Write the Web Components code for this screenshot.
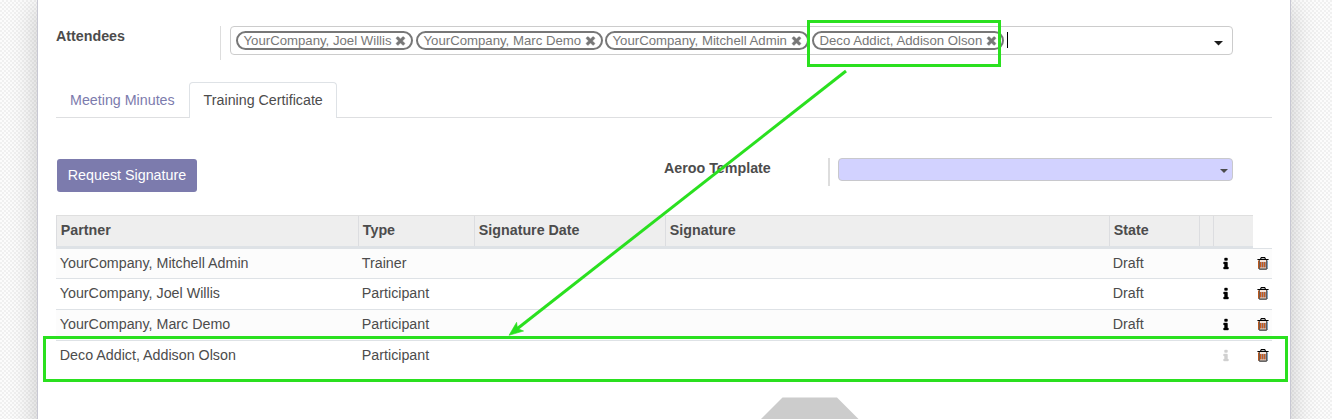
<!DOCTYPE html>
<html lang="en">
<head>
<meta charset="utf-8">
<title>Attendees</title>
<style>
html,body{margin:0;height:100%;overflow:hidden;background:#fff}
body{font:14.28px/20px "Liberation Sans",Arial,sans-serif;color:#4c4c4c}
</style>
</head>
<body>
<meeting-page></meeting-page>
<script>
const define = (name, html, setup) => customElements.define(name, class extends HTMLElement {
  constructor(){
    super();
    const t = document.createElement('template');
    t.innerHTML = html;
    this.attachShadow({mode:'open'}).appendChild(t.content.cloneNode(true));
  }
  connectedCallback(){ if(setup) setup(this, this.shadowRoot); }
});

define('icon-times', `<style>:host{display:block;width:13px;height:13px}svg{display:block}</style>
<svg width="13" height="13" viewBox="0 0 1792 1792" fill="#777" stroke="#777" stroke-width="60"><path d="M1490 1322q0 40-28 68l-136 136q-28 28-68 28t-68-28l-294-294-294 294q-28 28-68 28t-68-28l-136-136q-28-28-28-68t28-68l294-294-294-294q-28-28-28-68t28-68l136-136q28-28 68-28t68 28l294 294 294-294q28-28 68-28t68 28l136 136q28 28 28 68t-28 68l-294 294 294 294q28 28 28 68z"/></svg>`);

define('icon-info', `<style>:host{display:block;width:14px;height:14px;color:#000}:host([muted]){color:#d0d0d0}svg{display:block}</style>
<svg width="14" height="14" viewBox="0 0 1792 1792" fill="currentColor" stroke="currentColor" stroke-width="50"><path d="M1216 1344v128q0 26-19 45t-45 19h-512q-26 0-45-19t-19-45v-128q0-26 19-45t45-19h64v-384h-64q-26 0-45-19t-19-45v-128q0-26 19-45t45-19h384q26 0 45 19t19 45v576h64q26 0 45 19t19 45zm-128-1152v192q0 26-19 45t-45 19h-256q-26 0-45-19t-19-45v-192q0-26 19-45t45-19h256q26 0 45 19t19 45z"/></svg>`);

define('icon-trash', `<style>:host{display:block;width:12px;height:13px}svg{display:block}</style>
<svg width="12" height="13" viewBox="0 0 12 13">
<rect x="2" y="3" width="8" height="9" fill="#f3e4da"/>
<path d="M1.5 3.500v8M3.500 5v5.500M5.500 5v5.500M7.500 5v5.500" stroke="#c65a1c"/>
<path d="M4.500 5v5.500M6.500 5v5.500M8.500 5v5.500" stroke="#a58a86"/>
<path d="M10.400 3.500v8" stroke="#4a86b8" stroke-width=".8"/>
<path d="M.4 2.500h11.200M3.500 2.300L4.300.6h3.400l.8 1.700" fill="none" stroke="#000" stroke-width="1.100"/>
<path d="M2.400 3v8.500M9.600 3v8.500" stroke="#3a2317" stroke-width=".8"/>
<path d="M1.800 11.500q.1.600.8.600h6.800q.7 0 .8-.6" fill="none" stroke="#000"/>
</svg>`);

define('attendee-tag', `<style>
:host{display:flex;align-items:center;box-sizing:border-box;height:19px;border:2px solid #777;border-radius:10px;padding:0 4px 0 5.5px;font-size:13.2px;line-height:15px;color:#777;white-space:nowrap}
span{flex:1}
</style><span><slot></slot></span><icon-times></icon-times>`);

define('field-label', `<style>:host{display:block;font-weight:bold;white-space:nowrap}</style><slot></slot>`);

define('tag-field', `<style>
:host{display:flex;box-sizing:border-box;width:1003px;height:29px;border:1px solid #ccc;border-radius:4px;padding:4px 9px 0 5px;background:#fff}
.tags{display:flex;flex:1}
.cursor{width:1px;height:16px;background:#000;margin:1px 0 0 3px}
svg{margin-top:10px}
</style><div class="tags"><slot></slot><div class="cursor"></div></div>
<svg width="9" height="5" viewBox="0 0 9 5"><path d="M0 0h9L4.5 4.5z" fill="#1c1c1c"/></svg>`);

define('select-field', `<style>
:host{display:flex;justify-content:flex-end;box-sizing:border-box;width:395px;height:23px;border:1px solid #c8c8cc;border-radius:4px;background:#d2d2ff;padding:10px 4px 0 0}
</style><svg width="8" height="4" viewBox="0 0 8 4"><path d="M0 0h8L4 4z" fill="#4c4c4c"/></svg>`);

define('tab-item', `<style>
:host{display:block;box-sizing:border-box;height:36px;padding:7px 14px 9px;border:1px solid transparent;border-bottom:0;color:#7c7bad;line-height:20px;white-space:nowrap}
:host([active]){border-color:#dee2e6;border-radius:4px 4px 0 0;background:#fff;color:#4c4c4c}
</style><slot></slot>`);
define('tab-bar', `<style>
:host{display:flex;box-sizing:border-box;height:36px;background:linear-gradient(#dedfe1,#dedfe1) 0 35px/100% 1px no-repeat}
</style><slot></slot>`);

define('action-button', `<style>
:host{display:block;box-sizing:border-box;width:140px;height:33px;border-radius:3px;background:#7c7bad;color:#fff;text-align:center;line-height:33px;font-size:14.3px;white-space:nowrap}
</style><slot></slot>`);

define('grid-head', `<style>
:host{display:grid;grid-template-columns:302px 116px 191px 444px 90px 14px 40px;width:1197px;height:33px;box-sizing:border-box;border-top:1px solid #dfdfdf;border-bottom:2px solid #dee2e6;background:#eee;font-weight:bold}
div{border-left:1px solid #dcdde0;padding:4px 0 0 3.8px;white-space:nowrap}
</style><div>Partner</div><div>Type</div><div>Signature Date</div><div>Signature</div><div>State</div><div></div><div></div>`);

define('grid-row', `<style>
:host{display:grid;grid-template-columns:302px 751px 95px 38px 30px;box-sizing:border-box;height:31px;border-top:1px solid #dee2e6;padding-top:4px}
:host([first]){height:30px}
:host([odd]){background:#fcfcfc}
div{padding-left:3.8px;white-space:nowrap}
icon-info{margin:3.5px 0 0 15px}
icon-trash{margin:4px 0 0 15px}
</style><div class="p"></div><div class="t"></div><div class="s"></div><icon-info></icon-info><icon-trash></icon-trash>`,
(el, r) => {
  r.querySelector('.p').textContent = el.getAttribute('partner');
  r.querySelector('.t').textContent = el.getAttribute('type');
  const s = el.getAttribute('state') || '';
  r.querySelector('.s').textContent = s;
  if(!s) r.querySelector('icon-info').setAttribute('muted','');
});

define('callout-marks', `<style>
:host{position:absolute;inset:0;pointer-events:none}svg{display:block}
</style><svg width="1332" height="419" viewBox="0 0 1332 419">
<g fill="none" stroke="#2ae01f" stroke-width="3">
<rect x="808.5" y="21.5" width="191" height="44"/>
<rect x="44.5" y="337.5" width="1242" height="43"/>
<path d="M846 71L515 330.5"/></g>
<path d="M509 335.3L516.6 322.3L517.5 328.5L523.6 331z" fill="#2ae01f" stroke="#2ae01f" stroke-width=".6"/>
</svg>`);

define('sheet-panel', `<style>
:host{display:block;box-sizing:border-box;width:1254px;height:520px;margin-left:37px;border:solid #c8c8d3;border-width:0 1px;background:#fff;box-shadow:0 6px 26px rgba(0,0,0,.2);padding:26px 18px 0}
</style><slot></slot>`);

define('meeting-page', `<style>
:host{display:block;position:relative;width:1332px;height:419px;overflow:hidden;
background:repeating-conic-gradient(#f0f0f0 0 25%,#fcfcfc 0 50%) 0 0/4px 4px}
.attendees{display:flex;height:56px}
.attendees field-label{width:164px}
.sep{width:1px;height:34px;background:#ddd;margin-right:9px}
.sep.two{width:2px;height:28px;margin-right:8px}
.actions{display:flex;padding:40px 0 0 1px;height:57px}
.actions field-label{margin-left:467px;width:164px}
action-button{margin-top:1px}
.foot{display:block;margin:26px 0 0 705px}
</style>
<sheet-panel>
<div class="attendees"><field-label>Attendees</field-label><div class="sep"></div>
<tag-field>
<attendee-tag style="width:177px;margin-right:3px">YourCompany, Joel Willis</attendee-tag><attendee-tag style="width:187px;margin-right:2px">YourCompany, Marc Demo</attendee-tag><attendee-tag style="width:204px;margin-right:3px">YourCompany, Mitchell Admin</attendee-tag><attendee-tag style="width:192px">Deco Addict, Addison Olson</attendee-tag>
</tag-field></div>
<tab-bar><tab-item style="width:133px;padding-left:13px">Meeting Minutes</tab-item><tab-item active style="width:148px;padding-left:13.6px">Training Certificate</tab-item></tab-bar>
<div class="actions"><action-button>Request Signature</action-button><field-label>Aeroo Template</field-label><div class="sep two"></div><select-field></select-field></div>
<grid-head></grid-head>
<grid-row first odd partner="YourCompany, Mitchell Admin" type="Trainer" state="Draft"></grid-row>
<grid-row partner="YourCompany, Joel Willis" type="Participant" state="Draft"></grid-row>
<grid-row odd partner="YourCompany, Marc Demo" type="Participant" state="Draft"></grid-row>
<grid-row partner="Deco Addict, Addison Olson" type="Participant"></grid-row>
<svg class="foot" width="100" height="60" viewBox="0 0 100 60"><path d="M-2 24L21.5 .5H76L99.500 24V60H-2z" fill="#ccc"/></svg>
</sheet-panel>
<callout-marks></callout-marks>`);
</script>
</body>
</html>
